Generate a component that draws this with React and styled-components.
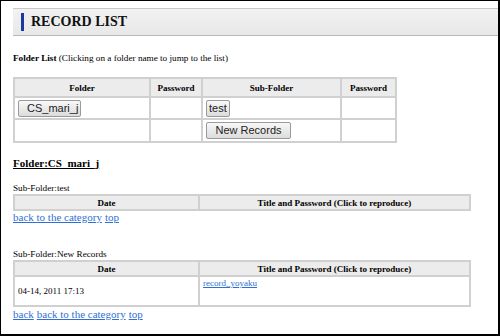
import React from 'react';
import styled, { createGlobalStyle } from 'styled-components';

const Global = createGlobalStyle`
  html, body { margin: 0; padding: 0; background: #fff; }
  body { font-family: "Liberation Serif", "Times New Roman", serif; color: #000; }
`;

const Frame = styled.div`
  box-sizing: border-box;
  width: 500px;
  height: 336px;
  border: 1px solid #000;
  border-right-width: 2px;
  border-bottom-width: 2px;
  padding: 7px 0 0 12px;
  overflow: hidden;
`;

const TitleBar = styled.div`
  display: flex;
  align-items: center;
  gap: 7px;
  height: 26px;
  padding-left: 8px;
  background: linear-gradient(#f2f2f2, #e8e8e8);
  border-top: 1px solid #c8c8c8;
  border-bottom: 1px solid #b8b8b8;
`;

const TitleMark = styled.span`
  width: 3px;
  height: 18px;
  background: #1a3aa0;
`;

const Title = styled.h1`
  margin: 0;
  font-size: 14px;
  font-weight: bold;
  color: #111;
`;

const Note = styled.p`
  margin: 16px 0 0;
  font-size: 9.2px;
  line-height: 12px;
`;

const Table = styled.table`
  border-collapse: collapse;
  width: ${p => p.$width}px;
  margin-top: ${p => p.$top || 0}px;
  font-size: 9px;
  table-layout: fixed;

  th, td {
    border: 2px solid #d0d0d0;
    padding: 0 3px;
  }
  th {
    background: #ececec;
    font-weight: bold;
    height: ${p => p.$headH || 13}px;
    text-align: center;
  }
`;

const Cell = styled.td`
  height: ${p => p.$h || 18}px;
  vertical-align: ${p => p.$align || 'middle'};
  font-size: 9px;
  padding-top: ${p => p.$align === 'top' ? 2 : 0}px;
`;

const Button = styled.button`
  font-family: "Liberation Sans", Arial, sans-serif;
  font-size: 11px;
  color: #222;
  height: 17px;
  padding: 0 ${p => p.$pad || 8}px;
  border: 1px solid #9a9a9a;
  border-radius: 2px;
  background: linear-gradient(#f8f8f8, #dcdcdc);
  line-height: 15px;
  width: ${p => p.$w ? p.$w + 'px' : 'auto'};
`;

const FolderHeading = styled.h2`
  margin: 14px 0 0;
  font-size: 11px;
  font-weight: bold;
  text-decoration: underline;
  line-height: 13px;
`;

const SubLabel = styled.div`
  margin-top: ${p => p.$top}px;
  font-size: 9.2px;
  line-height: 12px;
`;

const Links = styled.div`
  display: flex;
  gap: 3px;
  font-size: ${p => p.$size || 11}px;
  line-height: 13px;
  margin-top: ${p => p.$top || 0}px;

  a { color: #2f6fd4; }
`;

export default function App() {
  return (
    <>
      <Global />
      <Frame>
        <TitleBar>
          <TitleMark />
          <Title>RECORD LIST</Title>
        </TitleBar>

        <Note><b>Folder List</b> (Clicking on a folder name to jump to the list)</Note>

        <Table $width={382} $top={13} $headH={17}>
          <colgroup>
            <col style={{ width: 136 }} />
            <col style={{ width: 52 }} />
            <col style={{ width: 139 }} />
            <col style={{ width: 55 }} />
          </colgroup>
          <thead>
            <tr>
              <th>Folder</th>
              <th>Password</th>
              <th>Sub-Folder</th>
              <th>Password</th>
            </tr>
          </thead>
          <tbody>
            <tr>
              <Cell $h={20}><Button $w={63}>CS_mari_j</Button></Cell>
              <Cell $h={20} />
              <Cell $h={20}><Button $pad={2}>test</Button></Cell>
              <Cell $h={20} />
            </tr>
            <tr>
              <Cell $h={21} />
              <Cell $h={21} />
              <Cell $h={21}><Button $w={85}>New Records</Button></Cell>
              <Cell $h={21} />
            </tr>
          </tbody>
        </Table>

        <FolderHeading>Folder:CS_mari_j</FolderHeading>

        <SubLabel $top={12}>Sub-Folder:test</SubLabel>
        <Table $width={458}>
          <colgroup>
            <col style={{ width: 185 }} />
            <col />
          </colgroup>
          <thead>
            <tr>
              <th>Date</th>
              <th>Title and Password (Click to reproduce)</th>
            </tr>
          </thead>
        </Table>
        <Links>
          <a href="#">back to the category</a>
          <a href="#">top</a>
        </Links>

        <SubLabel $top={24}>Sub-Folder:New Records</SubLabel>
        <Table $width={458}>
          <colgroup>
            <col style={{ width: 185 }} />
            <col />
          </colgroup>
          <thead>
            <tr>
              <th>Date</th>
              <th>Title and Password (Click to reproduce)</th>
            </tr>
          </thead>
          <tbody>
            <tr>
              <Cell $h={28}>04-14, 2011 17:13</Cell>
              <Cell $h={28} $align="top">
                <Links $size={9}><a href="#">record_yoyaku</a></Links>
              </Cell>
            </tr>
          </tbody>
        </Table>
        <Links $top={1}>
          <a href="#">back</a>
          <a href="#">back to the category</a>
          <a href="#">top</a>
        </Links>
      </Frame>
    </>
  );
}
